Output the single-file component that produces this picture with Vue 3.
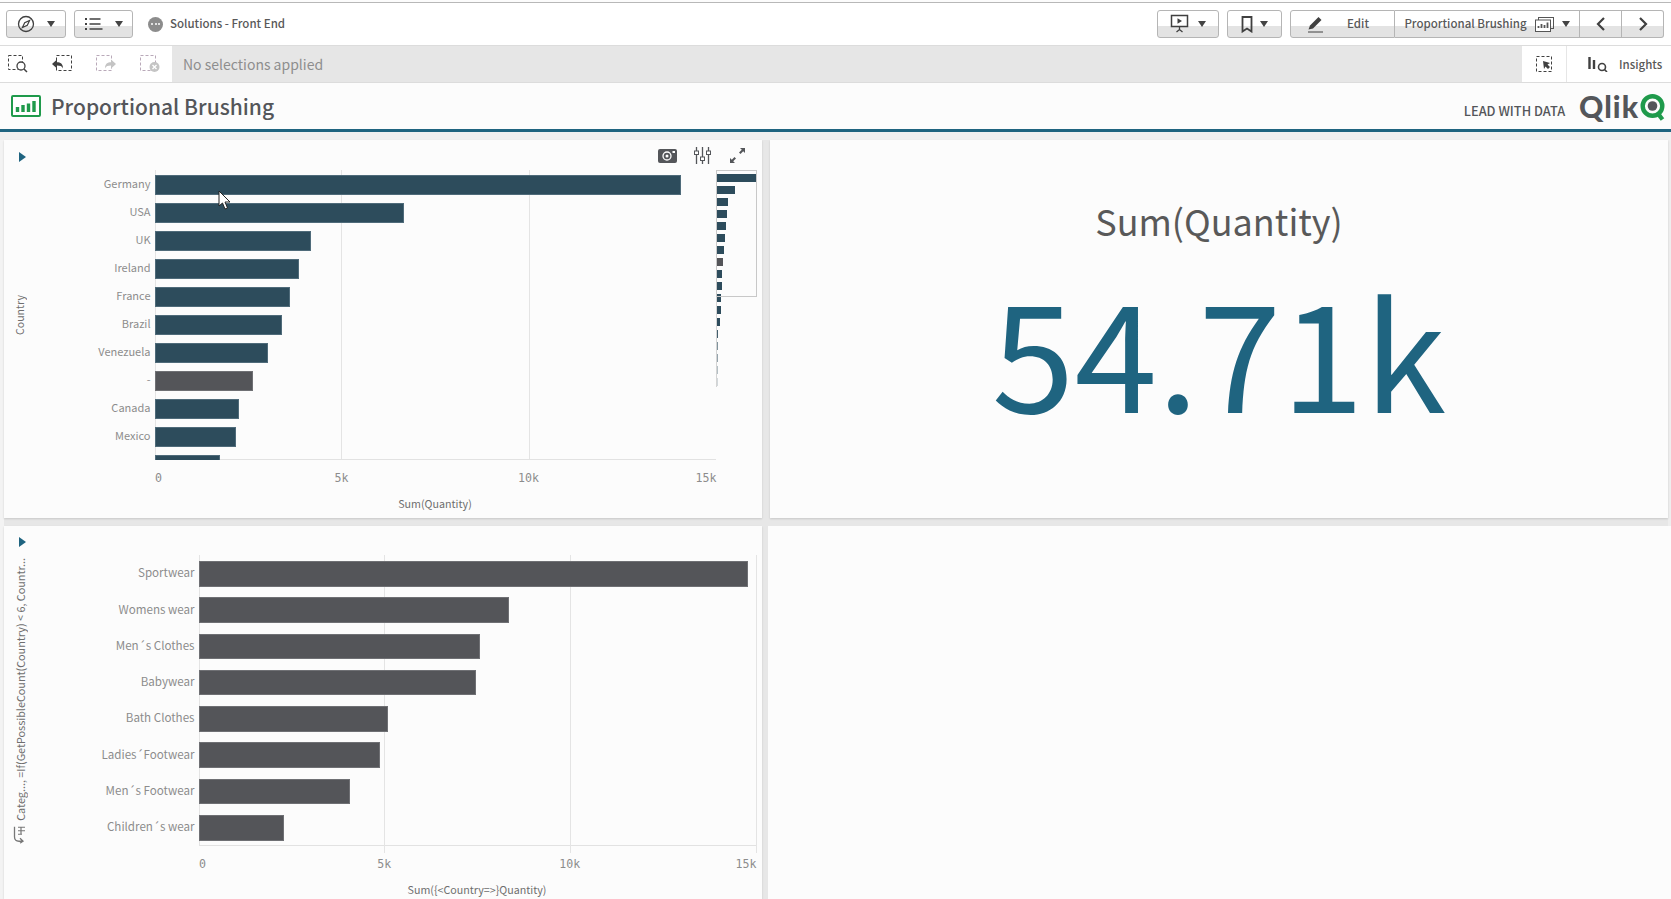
<template>
  <div class="page">
    <!-- Top toolbar -->
    <header class="toolbar">
      <button class="btn nav-btn">
        <svg width="18" height="18" viewBox="0 0 18 18"><circle cx="9" cy="9" r="7.5" fill="none" stroke="#404040" stroke-width="1.3"/><path d="M12.6 5.4 10.3 10.3 5.4 12.6 7.7 7.7Z" fill="none" stroke="#404040" stroke-width="1.2"/></svg>
        <span class="caret"></span>
      </button>
      <button class="btn list-btn">
        <svg width="18" height="14" viewBox="0 0 18 14"><path d="M0 2h2M0 7h2M0 12h2" stroke="#404040" stroke-width="1.8"/><path d="M4.500 2h11M4.500 7h11M4.500 12h13" stroke="#404040" stroke-width="1.6"/></svg>
        <span class="caret"></span>
      </button>
      <span class="app-dot"><i></i><i></i><i></i></span>
      <span class="app-name">Solutions - Front End</span>
      <span class="spacer"></span>
      <button class="btn story-btn">
        <svg width="20" height="20" viewBox="0 0 20 20"><rect x="1.500" y="1.500" width="16" height="11" fill="none" stroke="#3f3f3f" stroke-width="1.500"/><path d="M7.500 4.200 12 7 7.500 9.800Z" fill="#3f3f3f"/><path d="M9.500 13v3M6.500 18l3-2.500 3 2.500" fill="none" stroke="#3f3f3f" stroke-width="1.300"/></svg>
        <span class="caret"></span>
      </button>
      <button class="btn mark-btn">
        <svg width="12" height="17" viewBox="0 0 12 17"><path d="M1.500 1h9v14.500L6 12.500l-4.500 3Z" fill="none" stroke="#404040" stroke-width="1.800"/></svg>
        <span class="caret"></span>
      </button>
      <div class="btn-group">
        <button class="btn edit-btn">
          <svg width="18" height="18" viewBox="0 0 18 18"><path d="M1.500 14.500 3 10.500 11.500 2l3 3L6 13.500Z" fill="#404040"/><path d="M1 17h15" stroke="#404040" stroke-width="1"/></svg>
          <span>Edit</span>
        </button>
        <button class="btn sheet-btn">
          <span>Proportional Brushing</span>
          <svg width="19" height="15" viewBox="0 0 19 15"><rect x="3.500" y="0.500" width="15" height="11" fill="none" stroke="#555" stroke-width="1"/><rect x="0.500" y="3" width="15" height="11.500" fill="#fff" stroke="#555" stroke-width="1"/><path d="M3.500 11V9M6.500 11V7M9.500 11V8M12.500 11V5.500" stroke="#555" stroke-width="1.800"/></svg>
          <span class="caret"></span>
        </button>
        <button class="btn arrow-btn">
          <svg width="10" height="14" viewBox="0 0 10 14"><path d="M8 1 2 7l6 6" fill="none" stroke="#404040" stroke-width="2.200"/></svg>
        </button>
        <button class="btn arrow-btn">
          <svg width="10" height="14" viewBox="0 0 10 14"><path d="M2 1l6 6-6 6" fill="none" stroke="#404040" stroke-width="2.200"/></svg>
        </button>
      </div>
    </header>

    <!-- Selections bar -->
    <section class="selbar">
      <div class="sel-tools">
        <svg width="20" height="18" viewBox="0 0 20 18"><rect x="0.500" y="0.500" width="14" height="14" fill="none" stroke="#404040" stroke-dasharray="3 2"/><circle cx="13" cy="11" r="4" fill="#fff" stroke="#404040" stroke-width="1.300"/><path d="m16 14 3 3" stroke="#404040" stroke-width="1.500"/></svg>
        <svg width="20" height="18" viewBox="0 0 20 18"><rect x="4.500" y="0.500" width="15" height="15" fill="none" stroke="#404040" stroke-dasharray="3 2"/><path d="M0 9l5-4.500v2.800c3.500 0 6 1.400 6 6.200-1-2.400-3-3-6-3v3Z" fill="#404040"/></svg>
        <svg width="20" height="18" viewBox="0 0 20 18"><rect x="0.500" y="0.500" width="15" height="15" fill="none" stroke="#b9a9b9" stroke-dasharray="3 2"/><path d="M20 9l-5-4.500v2.800c-3.500 0-6 1.400-6 6.200 1-2.400 3-3 6-3v3Z" fill="#c4c4c4"/></svg>
        <svg width="20" height="18" viewBox="0 0 20 18"><rect x="0.500" y="0.500" width="15" height="15" fill="none" stroke="#b9a9b9" stroke-dasharray="3 2"/><circle cx="14.500" cy="12" r="5" fill="#c4c4c4"/><path d="m12.500 10 4 4m0-4-4 4" stroke="#fff" stroke-width="1.300"/></svg>
      </div>
      <div class="sel-text">No selections applied</div>
      <div class="sel-cell">
        <svg width="16" height="16" viewBox="0 0 16 16"><rect x="0.500" y="0.500" width="15" height="15" fill="none" stroke="#404040" stroke-dasharray="3 2"/><path d="M7 5l7 2-2.500 1.500L14 11l-2 2-2.500-2.500L8 13Z" fill="#404040"/></svg>
      </div>
      <div class="insights">
        <svg width="21" height="16" viewBox="0 0 21 16"><path d="M1.500 1v12M6 4v9" stroke="#404040" stroke-width="2.400"/><circle cx="14" cy="11" r="3.500" fill="none" stroke="#404040" stroke-width="1.600"/><path d="m16.500 13.500 2.500 2.500" stroke="#404040" stroke-width="1.600"/></svg>
        <span>Insights</span>
      </div>
    </section>

    <!-- Sheet title -->
    <section class="titlebar">
      <svg class="sheet-icon" width="30" height="22" viewBox="0 0 30 22"><rect x="1" y="1" width="28" height="20" rx="1" fill="#fff" stroke="#1f9a4b" stroke-width="2"/><path d="M6.500 17v-5M12 17v-7M17.500 17v-8.500M23 17V6" stroke="#1f9a4b" stroke-width="3.400"/></svg>
      <h1>Proportional Brushing</h1>
      <span class="spacer"></span>
      <span class="slogan">LEAD WITH DATA</span>
      <span class="qlik-word">Qlik</span>
      <svg class="qlik-ring" width="27" height="27" viewBox="0 0 27 27"><circle cx="12.500" cy="12" r="9.800" fill="none" stroke="#1f9a4b" stroke-width="4.400"/><circle cx="12.500" cy="12" r="4.800" fill="#54565a"/><path d="m17.500 19 5 6.500" stroke="#1f9a4b" stroke-width="4.400"/></svg>
    </section>

    <main class="sheet">
      <!-- Country chart -->
      <article class="panel">
        <span class="play"></span>
        <div class="panel-tools">
          <svg width="19" height="14" viewBox="0 0 19 14"><rect width="19" height="14" rx="2" fill="#54565a"/><circle cx="9" cy="7" r="4" fill="none" stroke="#fff" stroke-width="1.300"/><circle cx="9" cy="7" r="1.500" fill="#fff"/><rect x="14.500" y="2" width="2.500" height="2" fill="#fff"/></svg>
          <svg width="17" height="17" viewBox="0 0 17 17"><path d="M2.500 0v17M8.500 0v17M14.500 0v17" stroke="#54565a" stroke-width="1.300"/><rect x="0.500" y="4" width="4" height="3.500" fill="#fff" stroke="#54565a"/><rect x="6.500" y="10" width="4" height="3.500" fill="#fff" stroke="#54565a"/><rect x="12.500" y="4" width="4" height="3.500" fill="#fff" stroke="#54565a"/></svg>
          <svg width="17" height="17" viewBox="0 0 17 17"><path d="M16 1h-5l1.800 1.800L10 5.500l1.500 1.500 2.700-2.700L16 6ZM1 16h5l-1.800-1.800L7 11.500 5.500 10l-2.700 2.700L1 11Z" fill="#54565a"/></svg>
        </div>
        <div class="chart chart-country">
          <div class="y-title"><span>Country</span></div>
          <div class="plot">
            <div class="grid-lines">
              <i v-for="t in ticks" :key="t.label" class="grid-line" :style="{ left: t.pct + '%' }"></i>
            </div>
            <div class="bars">
              <div v-for="c in countries" :key="c.name" class="bar-row">
                <span class="bar-label">{{ c.label }}</span>
                <span class="bar-track">
                  <span class="bar" :class="{ excluded: c.label === '-' }" :style="{ width: (c.value / 15000) * 100 + '%' }"></span>
                </span>
              </div>
            </div>
          </div>
          <div class="minimap">
            <span class="mini-frame"></span>
            <span
              v-for="(m, i) in mini"
              :key="i"
              class="mini-bar"
              :class="{ excluded: i === 7 }"
              :style="{ width: m.w + 'px', opacity: m.o }"
            ></span>
          </div>
          <div class="axis">
            <span v-for="t in ticks" :key="t.label" class="tick" :class="t.cls" :style="{ left: t.pct + '%' }">{{ t.label }}</span>
          </div>
          <div class="x-title">Sum(Quantity)</div>
        </div>
        <svg class="cursor" width="14" height="20" viewBox="0 0 14 20"><path d="M1 1v15l3.500-3 2.500 6 2.500-1-2.500-6h5Z" fill="#fff" stroke="#222" stroke-width="1"/></svg>
      </article>

      <!-- KPI -->
      <article class="panel kpi">
        <div class="kpi-title">Sum(Quantity)</div>
        <div class="kpi-value">54.71k</div>
      </article>

      <!-- Category chart -->
      <article class="panel">
        <span class="play"></span>
        <div class="chart chart-category">
          <div class="y-title">
            <svg class="dim-icon" width="13" height="18" viewBox="0 0 13 18"><path d="M1.500 1v10c0 3 1.500 4.500 4.500 4.500h3M7 12.500l3 3-3 2" fill="none" stroke="#777" stroke-width="1.300"/><path d="M5 1.500h7M5 5h7M5 8.500h4M8 1.500v7" fill="none" stroke="#777" stroke-width="1.200"/></svg>
            <span>Categ..., =If(GetPossibleCount(Country) &lt; 6, Countr...</span>
          </div>
          <div class="plot">
            <div class="grid-lines">
              <i v-for="t in ticks" :key="t.label" class="grid-line" :style="{ left: t.pct + '%' }"></i>
            </div>
            <div class="bars">
              <div v-for="c in categories" :key="c.name" class="bar-row">
                <span class="bar-label">{{ c.name }}</span>
                <span class="bar-track">
                  <span class="bar excluded" :style="{ width: (c.value / 15000) * 100 + '%' }"></span>
                </span>
              </div>
            </div>
          </div>
          <div class="axis">
            <span v-for="t in ticks" :key="t.label" class="tick" :class="t.cls" :style="{ left: t.pct + '%' }">{{ t.label }}</span>
          </div>
          <div class="x-title">Sum({&lt;Country=&gt;}Quantity)</div>
        </div>
      </article>

      <div class="empty-cell"></div>
    </main>
  </div>
</template>

<script setup>
const ticks = [
  { label: '0', pct: 0, cls: 'first' },
  { label: '5k', pct: 33.333, cls: '' },
  { label: '10k', pct: 66.667, cls: '' },
  { label: '15k', pct: 100, cls: 'last' }
]

const countries = [
  { name: 'Germany', label: 'Germany', value: 14080 },
  { name: 'USA', label: 'USA', value: 6660 },
  { name: 'UK', label: 'UK', value: 4190 },
  { name: 'Ireland', label: 'Ireland', value: 3860 },
  { name: 'France', label: 'France', value: 3610 },
  { name: 'Brazil', label: 'Brazil', value: 3420 },
  { name: 'Venezuela', label: 'Venezuela', value: 3040 },
  { name: 'Null', label: '-', value: 2640 },
  { name: 'Canada', label: 'Canada', value: 2250 },
  { name: 'Mexico', label: 'Mexico', value: 2170 },
  { name: 'Other', label: '', value: 1740 }
]

const mini = [
  { w: 39, o: 1 }, { w: 18, o: 1 }, { w: 11, o: 1 }, { w: 10, o: 1 }, { w: 9.3, o: 1 }, { w: 8.7, o: 1 },
  { w: 7.7, o: 1 }, { w: 6.7, o: 1 }, { w: 5.7, o: 1 }, { w: 5.3, o: 1 }, { w: 4, o: 1 }, { w: 4, o: 1 },
  { w: 3.7, o: 1 }, { w: 1.3, o: 0.9 }, { w: 1, o: 0.6 }, { w: 1, o: 0.5 }, { w: 1, o: 0.35 }, { w: 1, o: 0.2 }
]

const categories = [
  { name: 'Sportwear', value: 14810 },
  { name: 'Womens wear', value: 8350 },
  { name: 'Men´s Clothes', value: 7570 },
  { name: 'Babywear', value: 7480 },
  { name: 'Bath Clothes', value: 5100 },
  { name: 'Ladies´Footwear', value: 4880 },
  { name: 'Men´s Footwear', value: 4070 },
  { name: 'Children´s wear', value: 2310 }
]
</script>

<style>
html, body {
  margin: 0;
  height: 100%;
  overflow: hidden;
  background: #fcfcfc;
}
</style>

<style scoped>
.page {
  width: 1671px;
  height: 899px;
  overflow: hidden;
  display: flex;
  flex-direction: column;
  font-family: "Noto Sans CJK JP", "Noto Sans", sans-serif;
  color: #595959;
  background: #fcfcfc;
}

.spacer {
  flex: 1;
}

/* Toolbar */
.toolbar {
  box-sizing: border-box;
  height: 44px;
  flex: none;
  margin-top: 2px;
  border-top: 1px solid #b8b8b8;
  border-bottom: 1px solid #dcdcdc;
  background: #fff;
  display: flex;
  align-items: center;
  padding: 0 7px 0 6px;
}

.btn {
  box-sizing: border-box;
  height: 28px;
  padding: 0;
  border: 1px solid #b5b5b5;
  border-radius: 3px;
  background: linear-gradient(#fff 0 56%, #e3e3e3 56%);
  display: flex;
  align-items: center;
  justify-content: center;
  font: inherit;
  font-size: 11.500px;
  font-weight: 500;
  color: #595959;
  white-space: nowrap;
}

.btn span:not(.caret),
.app-name {
  position: relative;
  top: -1px;
}

.caret {
  width: 0;
  height: 0;
  border-left: 4.500px solid transparent;
  border-right: 4.500px solid transparent;
  border-top: 6px solid #444;
}

.nav-btn {
  width: 60px;
  gap: 12px;
}

.list-btn {
  width: 59px;
  margin-left: 8px;
  gap: 12px;
}

.app-dot {
  margin-left: 15px;
  width: 15px;
  height: 15px;
  border-radius: 50%;
  background: #8c8c8c;
  display: flex;
  align-items: center;
  justify-content: center;
  gap: 1.500px;
}

.app-dot i {
  width: 2px;
  height: 2px;
  border-radius: 50%;
  background: #fff;
}

.app-name {
  margin-left: 7px;
  font-size: 11.500px;
  font-weight: 500;
  line-height: 18px;
}

.story-btn {
  width: 62px;
  gap: 8px;
}

.mark-btn {
  width: 55px;
  margin-left: 8px;
  gap: 7px;
}

.btn-group {
  display: flex;
  margin-left: 8px;
}

.btn-group .btn {
  border-radius: 0;
  border-left-width: 0;
}

.btn-group .btn:first-child {
  border-left-width: 1px;
  border-radius: 3px 0 0 3px;
}

.btn-group .btn:last-child {
  border-radius: 0 3px 3px 0;
}

.edit-btn {
  width: 105px;
  gap: 22px;
  padding-right: 9px;
}

.sheet-btn {
  width: 185px;
  gap: 8px;
}

.arrow-btn {
  width: 42px;
}

/* Selections */
.selbar {
  box-sizing: border-box;
  height: 37px;
  flex: none;
  border-bottom: 1px solid #dcdcdc;
  background: #fff;
  display: flex;
  align-items: stretch;
}

.sel-tools {
  box-sizing: border-box;
  width: 172px;
  padding: 0 12px 0 8px;
  display: flex;
  align-items: center;
  justify-content: space-between;
}

.sel-text {
  flex: 1;
  background: #e6e6e6;
  padding-left: 11px;
  font-size: 14px;
  line-height: 36px;
  color: #8e8e8e;
}

.sel-cell {
  width: 44px;
  display: flex;
  align-items: center;
  justify-content: center;
  border-right: 1px solid #e6e6e6;
}

.insights {
  width: 104px;
  box-sizing: border-box;
  padding-left: 21px;
  display: flex;
  align-items: center;
  gap: 10px;
  font-size: 11.500px;
  font-weight: 500;
}

/* Title */
.titlebar {
  box-sizing: border-box;
  height: 49px;
  flex: none;
  border-bottom: 3px solid #1f6480;
  background: #fcfcfc;
  display: flex;
  align-items: center;
  padding: 0 4px 0 11px;
}

.sheet-icon {
  margin-right: 10px;
}

h1 {
  margin: 0;
  font-size: 21px;
  font-weight: 500;
  line-height: 36px;
  color: #54565a;
}

.slogan {
  font-size: 12.800px;
  font-weight: 500;
  margin-top: 9px;
  margin-right: 14px;
  color: #54565a;
}

.qlik-word {
  font-family: Lato, sans-serif;
  font-weight: 900;
  font-size: 30px;
  line-height: 30px;
  letter-spacing: 1px;
  color: #54565a;
}

.qlik-ring {
  margin-left: 1px;
  margin-top: 2px;
}

/* Sheet grid */
.sheet {
  flex: 1;
  min-height: 0;
  box-sizing: border-box;
  display: grid;
  grid-template-columns: 758px 898px;
  grid-template-rows: 378px 373px;
  column-gap: 8px;
  row-gap: 8px;
  padding: 8px 3px 0 4px;
  background: #e7e7e7;
  box-shadow: inset 0 8px 0 #f0f0f0, inset 4px 0 0 #f3f3f3, inset -3px 0 0 #eeeeee;
}

.panel {
  position: relative;
  background: #fcfcfc;
  overflow: hidden;
  box-shadow: 0 1px 2px rgba(0, 0, 0, 0.14);
}

.empty-cell {
  background: #fcfcfc;
  margin: 0 -3px 0 -2px;
}

.play {
  position: absolute;
  left: 15px;
  top: 12px;
  width: 0;
  height: 0;
  border-top: 5px solid transparent;
  border-bottom: 5px solid transparent;
  border-left: 7px solid #1f6480;
}

.panel + .panel + .panel .play {
  top: 11px;
}

.panel-tools {
  position: absolute;
  top: 7px;
  right: 16px;
  display: flex;
  align-items: center;
  gap: 17px;
}

.panel-tools svg:last-child {
  margin-left: 1px;
}

.cursor {
  position: absolute;
  left: 214px;
  top: 50px;
}

/* Charts */
.chart {
  display: grid;
}

.chart-country {
  padding-top: 30px;
  grid-template-columns: 150.500px 561px 41px;
  grid-template-rows: 290px 36px 20px;
}

.chart-category {
  padding-top: 29px;
  grid-template-columns: 194.500px 557px;
  grid-template-rows: 291px 35px 20px;
}

.y-title {
  grid-row: 1;
  grid-column: 1;
  align-self: center;
  justify-self: start;
  margin-left: 9px;
  writing-mode: vertical-rl;
  transform: rotate(180deg);
  font-size: 10.600px;
  line-height: 14px;
  color: #6e6e6e;
  white-space: nowrap;
  display: flex;
  align-items: center;
  gap: 5px;
  z-index: 1;
}

.chart-category .y-title {
  font-size: 10.800px;
}

.dim-icon {
  transform: rotate(180deg);
}

.plot {
  grid-row: 1;
  grid-column: 1 / 3;
  position: relative;
  overflow: hidden;
}

.chart-category .plot {
  overflow: visible;
}

.grid-lines {
  position: absolute;
  top: 0;
  bottom: 0;
  left: 150.500px;
  width: 561px;
  border-bottom: 1px solid #e2e2e2;
}

.chart-category .grid-lines {
  left: 194.500px;
  width: 557px;
}

.grid-line {
  position: absolute;
  top: 0;
  bottom: 0;
  width: 1px;
  background: #e4e4e4;
}

.chart-category .grid-line:not(:first-child) {
  bottom: -8px;
}

.bars {
  position: relative;
  display: flex;
  flex-direction: column;
}

.bar-row {
  display: grid;
  align-items: center;
}

.bar-label {
  text-align: right;
  padding-right: 4px;
  font-size: 11px;
  line-height: 16px;
  color: #8c8c8c;
  white-space: nowrap;
  position: relative;
  top: -2.500px;
}

.chart-category .bar-label {
  font-size: 11.600px;
  top: -1.500px;
}

.bar-track {
  display: block;
  height: 100%;
}

.bar {
  display: block;
  box-sizing: border-box;
  height: 100%;
  background: #2d4c5c;
  border: 1px solid #4f6b7a;
}

.bar.excluded {
  background: #545559;
  border-color: #6f7074;
}

.chart-country .bars {
  padding-top: 5px;
  gap: 8px;
}

.chart-country .bar-row {
  grid-template-columns: 150.500px 561px;
  height: 20px;
}

.chart-category .bars {
  padding-top: 6px;
  gap: 10.800px;
}

.chart-category .bar-row {
  grid-template-columns: 194.500px 557px;
  height: 25.500px;
}

/* Minimap */
.minimap {
  grid-row: 1 / 3;
  grid-column: 3;
  position: relative;
  border-left: 1px solid #d4d4d4;
  height: 213px;
  display: flex;
  flex-direction: column;
  gap: 4px;
  padding: 4px 0 0 0;
  overflow: visible;
}

.mini-frame {
  position: absolute;
  left: -1px;
  top: 0;
  width: 39px;
  height: 125px;
  border: 1px solid #c8c8c8;
}

.mini-bar {
  display: block;
  height: 8px;
  flex: none;
  background: #2d4c5c;
}

.mini-bar.excluded {
  background: #545559;
}

/* Axis */
.axis {
  grid-row: 2;
  grid-column: 2;
  position: relative;
  font-family: "DejaVu Sans Mono", monospace;
  font-size: 11.600px;
  color: #8c8c8c;
}

.tick {
  position: absolute;
  top: 11px;
  line-height: 14px;
  transform: translateX(-50%);
}

.chart-category .tick {
  top: 11px;
}

.tick.first {
  transform: none;
  margin-left: 0.500px;
}

.tick.last {
  transform: translateX(-100%);
  margin-left: 1px;
}

.x-title {
  grid-row: 3;
  grid-column: 2;
  text-align: center;
  font-size: 10.700px;
  line-height: 16px;
  color: #6e6e6e;
}

.chart-category .x-title {
  margin-top: 1px;
}

/* KPI */
.kpi {
  display: flex;
  flex-direction: column;
  align-items: center;
}

.kpi-title {
  margin-top: 57px;
  font-size: 36px;
  line-height: 46px;
  font-weight: 400;
  color: #595959;
}

.kpi-value {
  margin-top: 10px;
  font-size: 149px;
  line-height: 190px;
  color: #1f6480;
}
</style>
